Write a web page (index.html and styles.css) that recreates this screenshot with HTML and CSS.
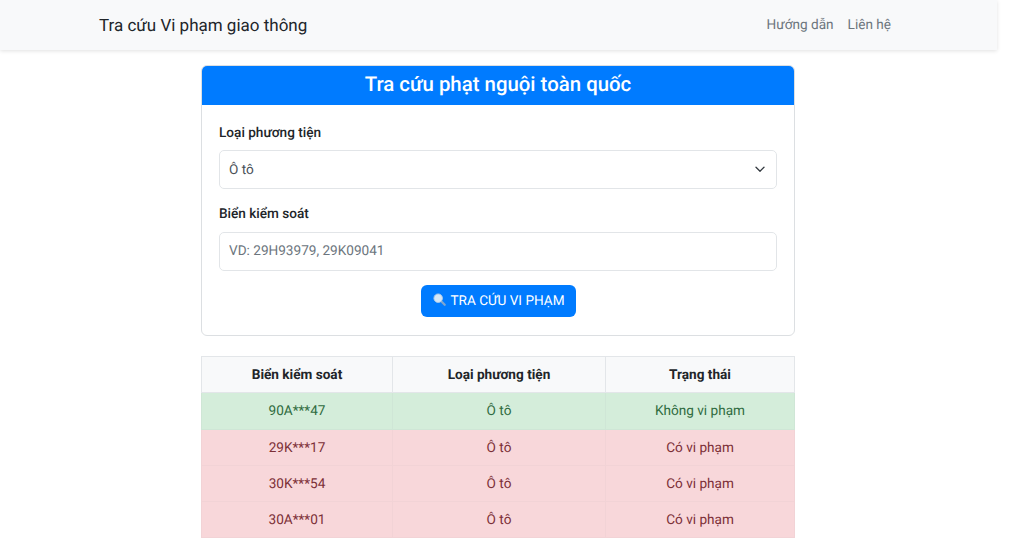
FILE: index.html
```html
<!DOCTYPE html>
<html lang="vi">
<head>
  <meta charset="UTF-8">
  <meta name="viewport" content="width=device-width, initial-scale=1.0">
  <title>Tra cứu Vi phạm giao thông</title>
  <link rel="stylesheet" href="styles.css">
</head>
<body>

  <div id="page">
    <nav>
      <a class="brand" href="#">Tra cứu Vi phạm giao thông</a>
      <div class="nav-links">
        <a href="#">Hướng dẫn</a>
        <a href="#">Liên hệ</a>
      </div>
    </nav>

    <main>
      <section class="card">
        <h1 class="card-title">Tra cứu phạt nguội toàn quốc</h1>
        <form class="card-body">
          <label for="vehicle">Loại phương tiện</label>
          <div class="select-box" id="vehicle">
            <span>Ô tô</span>
            <svg width="10" height="7" viewBox="0 0 10 7"><path d="M1 1.2l4 4 4-4" fill="none" stroke="#343a40" stroke-width="1.3" stroke-linecap="round" stroke-linejoin="round"/></svg>
          </div>
          <label for="plate">Biển kiểm soát</label>
          <input id="plate" type="text" placeholder="VD: 29H93979, 29K09041">
          <div class="actions">
            <button type="button">
              <svg width="13" height="13" viewBox="0 0 14 14"><path d="M8.6 8.6l4 4" stroke="#7fa6cf" stroke-width="2.4" stroke-linecap="round"/><circle cx="5.6" cy="5.6" r="4.6" fill="#d5e6f6" stroke="#a9c8e8"/></svg>
              TRA CỨU VI PHẠM
            </button>
          </div>
        </form>
      </section>

      <table>
        <thead>
          <tr><th class="col-plate">Biển kiểm soát</th><th class="col-type">Loại phương tiện</th><th>Trạng thái</th></tr>
        </thead>
        <tbody>
          <tr class="ok"><td>90A***47</td><td>Ô tô</td><td>Không vi phạm</td></tr>
          <tr class="bad"><td>29K***17</td><td>Ô tô</td><td>Có vi phạm</td></tr>
          <tr class="bad"><td>30K***54</td><td>Ô tô</td><td>Có vi phạm</td></tr>
          <tr class="bad"><td>30A***01</td><td>Ô tô</td><td>Có vi phạm</td></tr>
        </tbody>
      </table>
    </main>
  </div>

</body>
</html>
```

FILE: styles.css
```css
* { margin: 0; padding: 0; box-sizing: border-box; font-family: Roboto, 'Liberation Sans', sans-serif; text-rendering: geometricPrecision; }
html, body { height: 100%; overflow: hidden; background: white; }

#page { width: 997px; }

/* Navbar */
nav {
  display: flex; align-items: center; justify-content: space-between;
  height: 50px; padding: 0 106px 0 99px;
  background: #f8f9fa; box-shadow: 0 1px 4px rgba(0,0,0,0.12);
}
nav a { text-decoration: none; }
nav .brand { font-size: 17px; color: #212529; margin-top: 1px; }
nav .nav-links { display: flex; gap: 14px; margin-top: -1px; }
nav .nav-links a { font-size: 13.6px; color: #6c757d; }

main { width: 594px; margin: 15px 0 0 201px; }

/* Card */
.card {
  background: white; border: 1px solid #dcdfe2; border-radius: 6px;
  overflow: hidden; height: 271px;
}
.card-title {
  height: 39px; line-height: 37px; text-align: center;
  background: #007bff; color: white; font-size: 20.4px; font-weight: 500;
}
.card-body { padding: 19px 17px 0; }
.card-body label { display: block; font-size: 13.6px; font-weight: 500; color: #212529; line-height: 18px; margin-bottom: 8px; }
.select-box, .card-body input {
  display: flex; align-items: center; justify-content: space-between;
  width: 100%; height: 39px; padding: 0 11px 0 9px;
  border: 1px solid #e2e5e8; border-radius: 5px;
  font-size: 13.6px; color: #495057; background: white;
}
.select-box { margin-bottom: 16px; }
.card-body input { margin-top: 9px; padding-bottom: 1px; }
.card-body input::placeholder { color: #6c757d; opacity: 1; }
.actions { display: flex; justify-content: center; margin-top: 14px; }
.actions button {
  display: flex; align-items: center; gap: 5px;
  height: 32px; width: 155px; padding: 0 0 0 12px;
  background: #007bff; color: white; border: none; border-radius: 6px;
  font-size: 13.6px;
}
.actions svg { margin-top: -4px; }

/* Table */
table { width: 100%; margin-top: 20px; border-collapse: collapse; font-size: 13.6px; }
th, td { text-align: center; border: 1px solid #e3e6e9; }
th { height: 36px; background: #f8f9fa; color: #212529; font-weight: 700; font-size: 13.6px; }
td { height: 36px; }
.col-plate { width: 191px; }
.col-type { width: 213px; }
.ok td { height: 37px; background: #d4edda; color: #2f6b40; border-color: #cfe6d6; }
.bad td { background: #f8d7da; color: #7c2f37; border-color: #f2d3d6; }
```
